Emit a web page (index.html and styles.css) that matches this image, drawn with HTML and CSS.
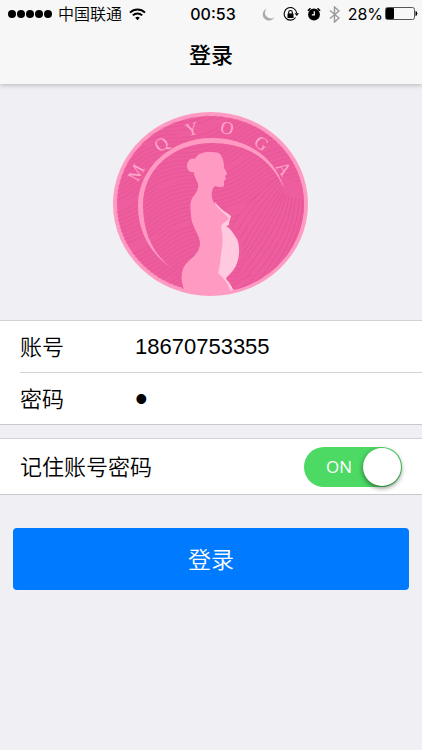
FILE: index.html
```html
<!DOCTYPE html>
<html lang="zh-CN">
<head>
  <meta charset="UTF-8">
  <meta name="viewport" content="width=device-width, initial-scale=1">
  <title>登录</title>
  <link rel="stylesheet" href="styles.css">
</head>
<body>
  <header class="header">
    <div class="status-bar">
      <div class="status-left">
        <span class="signal"><i></i><i></i><i></i><i></i><i></i></span>
        <span class="carrier">中国联通</span>
        <svg class="wifi" width="17" height="13" viewBox="0 0 17 13" fill="none" stroke="#000" stroke-width="2">
          <path d="M1 4.600a10.600 10.600 0 0 1 15 0"/>
          <path d="M3.800 7.400a6.700 6.700 0 0 1 9.400 0"/>
          <path d="M8.500 12.200l-2.300-2.400a3.300 3.300 0 0 1 4.600 0z" fill="#000" stroke="none"/>
        </svg>
      </div>
      <time class="clock">00:53</time>
      <div class="status-right">
        <svg width="13" height="13" viewBox="0 0 13 13">
          <path d="M4.800 .5a6.200 6.200 0 1 0 7.800 8.400A5.700 5.700 0 0 1 4.800 .5z" fill="#aaa"/>
        </svg>
        <svg width="16" height="15" viewBox="0 0 16 15">
          <path d="M12.600 10.500a6.300 6.300 0 1 1 1.100-4.500" fill="none" stroke="#000" stroke-width="1.100"/>
          <path d="M11.500 6.300h4.500l-2.200 2.800z"/>
          <rect x="4.500" y="6.500" width="6" height="4.500" rx=".5"/>
          <path d="M5.700 7V5.300a1.800 1.800 0 0 1 3.600 0V7" fill="none" stroke="#000" stroke-width="1.100"/>
        </svg>
        <svg width="14" height="14" viewBox="0 0 14 14">
          <circle cx="7" cy="7.500" r="5.900"/>
          <path d="M.9 3.800l2.600-2.500M13.100 3.800l-2.600-2.500" stroke="#000" stroke-width="1.500"/>
          <path d="M7.300 4.300v3.500H4.800" fill="none" stroke="#fff" stroke-width="1.200"/>
        </svg>
        <svg width="11" height="17" viewBox="0 0 11 17">
          <path d="M1 4.500l9 7.500L5.500 16V1l4.500 4L1 12.500" fill="none" stroke="#999" stroke-width="1.400"/>
        </svg>
        <span class="percent">28%</span>
        <svg class="battery" width="33" height="14" viewBox="0 0 33 14">
          <rect x=".5" y=".5" width="29" height="12" rx="2" fill="none" stroke="#555"/>
          <rect x="1" y="1" width="8" height="11" rx="1"/>
          <path d="M31 4.500q2 2 0 4z" stroke="#000"/>
        </svg>
      </div>
    </div>
    <h1 class="title">登录</h1>
  </header>

  <main>
    <div class="logo">
      <svg width="196" height="186" viewBox="0 0 196 186" role="img" aria-label="MQYOGA">
        <defs>
          <pattern id="waves" width="108" height="44" patternUnits="userSpaceOnUse" patternTransform="rotate(-20)">
            <path d="M0 4q27-10 54 0t54 0M0 8q27-10 54 0t54 0M0 12q27-10 54 0t54 0M0 16q27-10 54 0t54 0M0 20q27-10 54 0t54 0M0 24q27-10 54 0t54 0M0 28q27-10 54 0t54 0M0 32q27-10 54 0t54 0M0 36q27-10 54 0t54 0M0 40q27-10 54 0t54 0M0 44q27-10 54 0t54 0" fill="none" stroke="#dc4b8d" stroke-width="1"/>
          </pattern>
          <clipPath id="disc"><ellipse cx="97" cy="93" rx="94" ry="89"/></clipPath>
        </defs>
        <ellipse cx="97.500" cy="93" rx="97.500" ry="92" fill="#ff9bc3"/>
        <ellipse cx="97.500" cy="93" rx="93.500" ry="88" fill="#ee5e9e"/>
        <g clip-path="url(#disc)">
          <rect width="196" height="186" fill="url(#waves)" opacity=".5"/>
          <path d="M165 66Q138 88 120 112L128 160L118 186H196V74z" fill="#ee5e9e"/>
          <path d="M165 66Q138 88 120 112M166 69Q140 92 124 120M167 72Q144 96 127 128M168 75Q149 100 129 136M169 78Q153 104 129 144M170 81Q157 109 128 152M171 83Q162 113 125 160M173 84Q167 117 128 165M176 85Q172 121 132 168M179 86Q177 125 137 171M182 87Q181 129 142 173M186 88Q185 131 148 173M190 89Q188 132 155 170M120 182Q132 170 152 172M124 185Q136 174 150 176M118 178Q128 166 140 164" fill="none" stroke="#dc4b8d" opacity=".5"/>
        </g>
        <path d="M59 157C38 144 25 121 25 95C25 57 58 27 99 27C134 27 162 46 171 77C158 48 134 32 99 32C59 32 30 59 30 94C30 120 39 143 59 157z" fill="#ff9bc3"/>
        <g class="logo-text">
          <text transform="translate(24 62) rotate(-62)" y="5">M</text>
          <text transform="translate(49 34) rotate(-38)" y="5">Q</text>
          <text transform="translate(79 19) rotate(-14)" y="5">Y</text>
          <text transform="translate(114 18) rotate(12)" y="5">O</text>
          <text transform="translate(148 33) rotate(36)" y="5">G</text>
          <text transform="translate(170 58) rotate(56)" y="5">A</text>
        </g>
        <g clip-path="url(#disc)">
          <path d="M108 115C115 113 119 120 124 128C128 138 126 151 121 158C118 163 113 166 113 168C117 172 120 177 122 184H105L100 160z" fill="#ffc9df"/>
          <path d="M102 91C107 98 113 101 118 105C117 109 116 110 116 114L109 117L104 105z" fill="#ffc9df"/>
          <path d="M82 48C84 43 90 41 96 41C100 41 104 41 107 43C110 47 111 51 111 57C112 59 114 61 114 63L112 65L113 68L111 70L111 75C108 77 105 76 102 75C100 77 99 79 99 81C98 85 99 89 102 93C106 99 112 103 116 107C115 110 110 111 108 115C110 126 110 132 108 143C107 151 107 156 105 162C112 168 116 174 119 184H74C69 176 67 167 70 158C73 149 87 145 87 132C87 124 78 115 78 104C77 96 77 90 80 86C83 82 86 78 85 73C84 69 81 66 81 61C77 62 74 59 74 55C74 50 78 46 82 48z" fill="#ff9bc3"/>
        </g>
      </svg>
    </div>

    <form class="login-form">
      <div class="list">
        <div class="row">
          <label class="row-label" for="account">账号</label>
          <input class="row-input" id="account" type="text" value="18670753355">
        </div>
        <div class="row">
          <label class="row-label" for="password">密码</label>
          <input class="row-input row-password" id="password" type="password" value="1">
        </div>
      </div>

      <div class="list">
        <div class="row row-remember">
          <label for="remember">记住账号密码</label>
          <div class="switch">
            <input class="switch-input" id="remember" type="checkbox" checked>
            <span class="switch-text">ON</span>
          </div>
        </div>
      </div>

      <button class="btn" type="button">登录</button>
    </form>
  </main>
</body>
</html>
```
FILE: styles.css
```css
* {
  box-sizing: border-box;
}

body {
  margin: 0;
  min-height: 100vh;
  background: #efeff4;
  color: #000;
  font-family: "Liberation Sans", "Noto Sans CJK SC", sans-serif;
  font-size: 22px;
}

/* Header */
.header {
  height: 84px;
  background: #f7f7f7;
  box-shadow: 0 1px 5px rgba(0, 0, 0, 0.25);
}

.status-bar {
  display: grid;
  grid-template-columns: 1fr auto 1fr;
  align-items: center;
  height: 28px;
  padding: 0 4px 0 8px;
}

.status-left,
.status-right {
  display: flex;
  align-items: center;
}

.status-right {
  justify-content: flex-end;
  gap: 8px;
}

.signal {
  display: flex;
  gap: 1px;
}

.signal i {
  width: 8px;
  height: 8px;
  border-radius: 50%;
  background: #000;
}

.carrier {
  margin: 0 7px 0 6px;
  padding-bottom: 2px;
  font-family: "Noto Sans CJK SC", sans-serif;
  font-size: 16px;
  font-weight: 350;
  line-height: 20px;
}

.clock {
  font-family: Inter, sans-serif;
  font-size: 16px;
  font-weight: 500;
}

.percent {
  font-family: Inter, sans-serif;
  font-size: 16px;
}

.battery {
  margin-left: -6px;
}

.title {
  margin: 0;
  font-size: 22px;
  font-weight: 500;
  line-height: 56px;
  text-align: center;
}

/* Logo */
.logo {
  display: flex;
  justify-content: center;
  padding: 27px 0 23px;
}

.logo-text {
  fill: #ffa6cb;
  font-family: "Liberation Serif", serif;
  font-size: 18px;
  text-anchor: middle;
}

/* Form */
.list {
  margin-bottom: 13px;
  border-top: 1px solid #d2d2d6;
  border-bottom: 1px solid #c8c7cc;
  background: #fff;
}

.row {
  display: flex;
  align-items: center;
  height: 51px;
  margin-left: 20px;
  font-family: "Noto Sans CJK SC", sans-serif;
  font-weight: 350;
  line-height: 32px;
}

.row + .row {
  height: 52px;
  border-top: 1px solid #d2d2d6;
}

.row label {
  padding-bottom: 4px;
}

.row-label {
  width: 115px;
}

.row-input {
  flex: 1;
  min-width: 0;
  height: 50px;
  padding: 0;
  border: 0;
  outline: 0;
  background: none;
  color: #000;
  font: 22px "Liberation Sans", sans-serif;
}

.row-password {
  font-size: 36px;
}

.row-remember {
  justify-content: space-between;
  height: 55px;
  margin-right: 20px;
}

/* Switch */
.switch {
  position: relative;
  display: flex;
}

.switch-input {
  display: flex;
  align-items: center;
  width: 98px;
  height: 40px;
  margin: 0;
  padding: 1px;
  border-radius: 20px;
  background: #ccc;
  appearance: none;
}

.switch-input::before {
  content: "";
  width: 38px;
  height: 38px;
  border-radius: 50%;
  background: #fff;
  box-shadow: 0 2px 5px rgba(0, 0, 0, 0.5);
}

.switch-input:checked {
  justify-content: flex-end;
  background: #4cd964;
}

.switch-text {
  position: absolute;
  top: 0;
  left: 22px;
  color: #fff;
  font-family: "Open Sans", sans-serif;
  font-size: 17px;
  font-weight: 400;
  line-height: 40px;
  pointer-events: none;
}

/* Button */
.btn {
  display: block;
  width: calc(100% - 26px);
  height: 62px;
  margin: 33px 13px 0;
  padding: 0 0 2px;
  border: 0;
  border-radius: 4px;
  background: #007aff;
  color: #fff;
  font-family: "Noto Sans CJK SC", sans-serif;
  font-size: 23px;
  font-weight: 350;
}

.btn:active {
  background: #0062cc;
}
```
